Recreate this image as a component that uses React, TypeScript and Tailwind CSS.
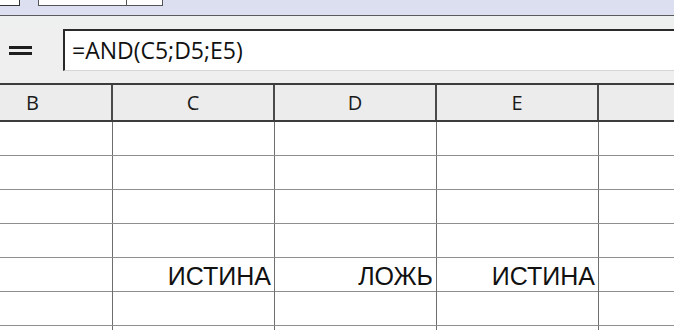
const cols = ["B", "C", "D", "E", ""];

const rows: string[][] = [
  ["", "", "", "", ""],
  ["", "", "", "", ""],
  ["", "", "", "", ""],
  ["", "", "", "", ""],
  ["", "ИСТИНА", "ЛОЖЬ", "ИСТИНА", ""],
  ["", "", "", "", ""],
  ["", "", "", "", ""],
];

const grid = "grid grid-cols-[113px_162px_162px_162px_1fr]";

export default function App() {
  return (
    <div className="w-[674px] h-[330px] overflow-hidden bg-white flex flex-col">
      {/* toolbar leftovers */}
      <div className="h-[16px] shrink-0 bg-[#dcdff0] border-b border-[#5a5a5a] flex items-start">
        <div className="w-[20px] h-[6px] bg-white border-r border-b border-[#333]" />
        <div className="ml-[18px] w-[125px] h-[6px] bg-white border-x border-b border-[#555] flex justify-end">
          <div className="w-[36px] h-full border-l border-[#555]" />
        </div>
      </div>
      <div className="h-[13px] shrink-0 bg-[#eef0f0]" />

      {/* formula bar */}
      <div className="h-[54px] shrink-0 flex bg-[#efefef]">
        <div className="w-[63px] shrink-0 flex flex-col items-start pl-[9px] pt-[17px] gap-[3px]">
          <div className="w-[23px] h-[3px] bg-[#1e1e1e]" />
          <div className="w-[23px] h-[3px] bg-[#1e1e1e]" />
        </div>
        <div className="flex-1 flex flex-col">
          <div className="h-[42px] bg-white border-t-2 border-l-2 border-[#2a2a2a] border-b border-b-[#d6d6d6] flex items-center pl-[7px] font-['Open_Sans',sans-serif] text-[23px] text-[#111] leading-none">
            =AND(C5;D5;E5)
          </div>
        </div>
      </div>

      {/* column headers */}
      <div className={`${grid} h-[39px] shrink-0 bg-[#ececec] border-t-2 border-b-2 border-[#3c3c3c]`}>
        {cols.map((c, i) => (
          <div
            key={i}
            className={`flex items-center font-['Open_Sans',sans-serif] text-[20px] text-[#1a1a1a] ${i === 0 ? "justify-start pl-[26px]" : "justify-center"} ${i < 4 ? "border-r-2 border-[#4a4a4a]" : ""}`}
          >
            {c}
          </div>
        ))}
      </div>

      {/* cells */}
      {rows.map((r, ri) => (
        <div key={ri} className={`${grid} h-[34px] shrink-0 border-b border-[#8e8e8e]`}>
          {r.map((v, ci) => (
            <div
              key={ci}
              className={`flex items-center justify-end pr-[3px] font-['Liberation_Sans',Arial,sans-serif] text-[25px] text-[#111] ${ci < 4 ? "border-r border-[#6e6e6e]" : ""}`}
            >
              {v}
            </div>
          ))}
        </div>
      ))}
    </div>
  );
}
